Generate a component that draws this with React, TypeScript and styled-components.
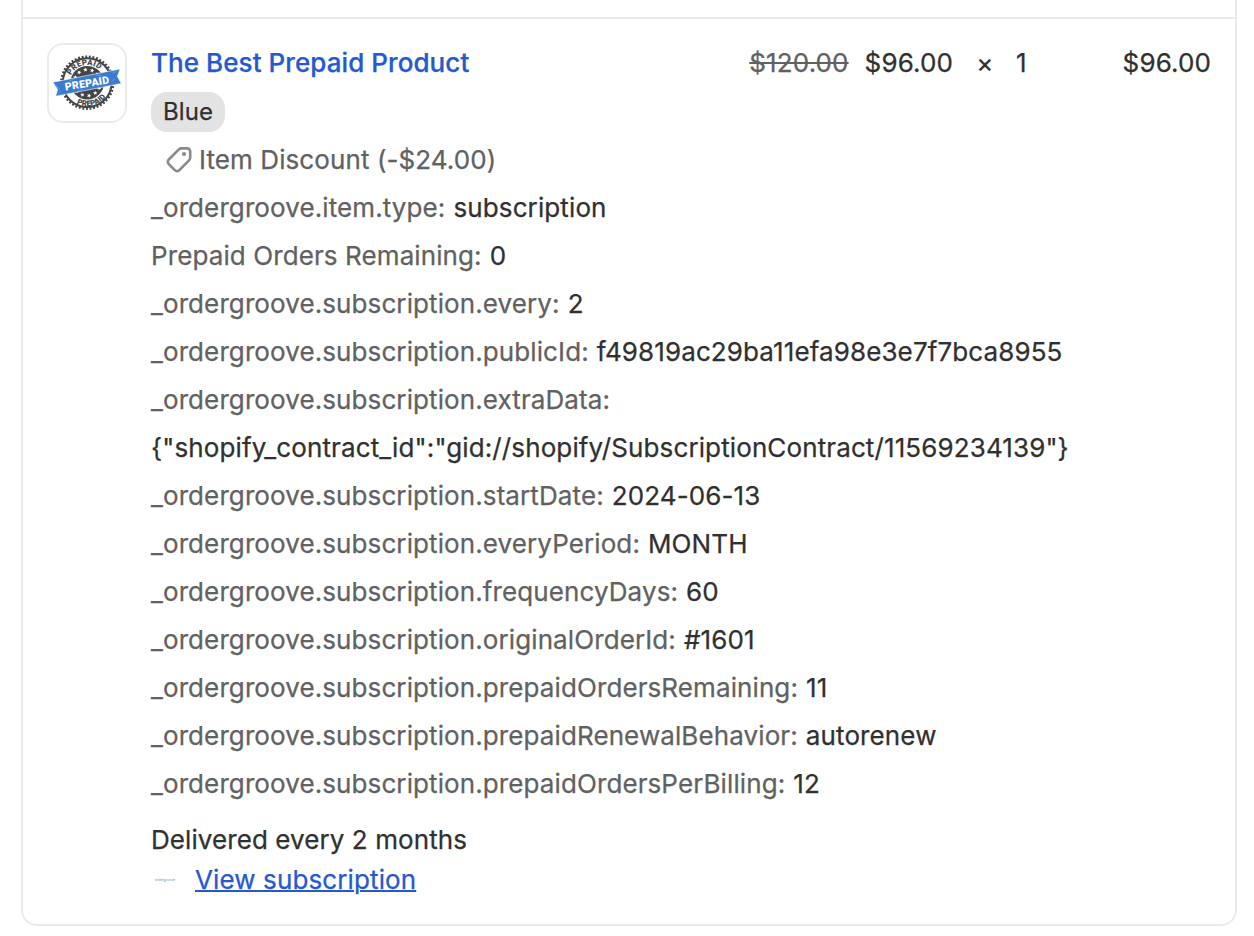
import React from "react";
import styled, { createGlobalStyle } from "styled-components";

const GlobalStyle = createGlobalStyle`
  *, *::before, *::after { box-sizing: border-box; }
  html, body { margin: 0; padding: 0; background: #fff; overflow: hidden; }
  body {
    font-family: Inter, "Liberation Sans", sans-serif;
    font-size: 26px;
    font-weight: 400;
    line-height: 40px;
    letter-spacing: 0.115px;
    color: #303030;
    -webkit-text-stroke: 0.25px currentColor;
    -webkit-font-smoothing: antialiased;
  }
  svg { -webkit-text-stroke: 0; letter-spacing: 0; }
`;

const Page = styled.main`
  height: 936px;
  padding: 0 17px 10px 21px;
  overflow: hidden;
`;

const Card = styled.section`
  display: flex;
  flex-direction: column;
  height: 926px;
  border: 2px solid #ebebeb;
  border-top: 0;
  border-radius: 0 0 16px 16px;
`;

const PreviousItem = styled.div`
  height: 19px;
  flex: none;
  border-bottom: 2px solid #ebebeb;
`;

const LineItem = styled.article`
  display: flex;
  gap: 24px;
  padding: 24px 24px 0;
`;

const Thumbnail = styled.div`
  flex: none;
  width: 80px;
  height: 80px;
  border: 2px solid #ebebeb;
  border-radius: 16px;

  svg { display: block; width: 76px; height: 76px; }
`;

const Content = styled.div`
  flex: 1;
  min-width: 0;
`;

const Header = styled.header`
  display: flex;
  height: 40px;
  white-space: nowrap;
`;

const Title = styled.a`
  flex: 1;
  color: #2459d1;
  font-weight: 500;
  letter-spacing: 0.07px;
  text-decoration: none;
`;

const OldPrice = styled.s`
  color: #616161;
  margin-right: 16px;
`;

const Times = styled.span`
  width: 20px;
  margin-left: 22px;
  text-align: center;
`;

const Quantity = styled.span`
  width: 46px;
  margin-left: 21px;
`;

const Total = styled.span`
  width: 149px;
  text-align: right;
`;

const Details = styled.div`
  display: flex;
  flex-direction: column;
  align-items: flex-start;
  gap: 8px;
  padding-top: 9px;
`;

const Variant = styled.span`
  height: 40px;
  padding: 0 12px;
  border-radius: 16px;
  background: #e3e3e3;
  font-size: 24px;
`;

const Discount = styled.div`
  display: flex;
  align-items: center;
  height: 40px;
  padding-left: 12px;
  color: #616161;
  letter-spacing: 0.09px;

  svg { width: 32px; height: 32px; margin-right: 4px; }
`;

const Property = styled.div<{ $stacked?: boolean }>`
  display: flex;
  flex-direction: ${(p) => (p.$stacked ? "column" : "row")};
  gap: 8px;
  white-space: nowrap;
`;

const Name = styled.span`
  color: #616161;
  letter-spacing: 0.1px;
`;

const Plan = styled.p`
  margin: 16px 0 0;
  letter-spacing: 0.08px;
`;

const Subscription = styled.div`
  display: flex;
  align-items: center;
  height: 40px;

  svg { width: 28px; height: 28px; margin-right: 16px; }
`;

const Link = styled.a`
  color: #2459d1;
  text-decoration: underline;
  text-decoration-thickness: 2px;
`;

const properties = [
  { name: "_ordergroove.item.type:", value: "subscription" },
  { name: "Prepaid Orders Remaining:", value: "0" },
  { name: "_ordergroove.subscription.every:", value: "2" },
  { name: "_ordergroove.subscription.publicId:", value: "f49819ac29ba11efa98e3e7f7bca8955" },
  {
    name: "_ordergroove.subscription.extraData:",
    value: '{"shopify_contract_id":"gid://shopify/SubscriptionContract/11569234139"}',
    stacked: true,
  },
  { name: "_ordergroove.subscription.startDate:", value: "2024-06-13" },
  { name: "_ordergroove.subscription.everyPeriod:", value: "MONTH" },
  { name: "_ordergroove.subscription.frequencyDays:", value: "60" },
  { name: "_ordergroove.subscription.originalOrderId:", value: "#1601" },
  { name: "_ordergroove.subscription.prepaidOrdersRemaining:", value: "11" },
  { name: "_ordergroove.subscription.prepaidRenewalBehavior:", value: "autorenew" },
  { name: "_ordergroove.subscription.prepaidOrdersPerBilling:", value: "12" },
];

const starPath = "M0-2.3 .6-.8 2.2-.7 1 .3 1.4 1.9 0 1-1.4 1.9-1 .3-2.2-.7-.6-.8Z";

function PrepaidStamp() {
  return (
    <svg viewBox="0 0 76 76" aria-hidden="true">
      <defs>
        <path id="upper-arc" d="M20.9 37.7a17.8 17.8 0 0 1 35.6 0" />
        <path id="lower-arc" d="M15.3 37.7a23.4 23.4 0 0 0 46.8 0" />
      </defs>
      <circle cx="38.2" cy="37.7" r="26" fill="none" stroke="#444547" strokeWidth="2.4" strokeDasharray="1.9 1.73" />
      <circle cx="38.2" cy="37.7" r="24.4" fill="#fff" stroke="#444547" strokeWidth="2" />
      <circle cx="38.2" cy="37.7" r="16.8" fill="#444547" />
      <g fill="#fff">
        {[-58, -30, 0, 30, 58, 122, 150, 180, 210, 238].map((a) => (
          <path key={a} d={starPath} transform={`rotate(${a - 8} 38.2 37.7) translate(38.2 24.6)`} />
        ))}
      </g>
      <g fill="#444547" fontFamily="Roboto, sans-serif" fontWeight="900" fontSize="7.8" textAnchor="middle">
        <text transform="translate(-.5) rotate(-11 38.7 37.7)" letterSpacing="0.3">
          <textPath href="#upper-arc" startOffset="50%">PREPAID</textPath>
        </text>
        <text transform="translate(-.5) rotate(-13 38.7 37.7)" letterSpacing="0.1">
          <textPath href="#lower-arc" startOffset="50%">PREPAID</textPath>
        </text>
      </g>
      <path d="M3.9 37.2 71.2 24 68.3 31.2 72.3 38.5 6.6 51.2 8.6 44.4Z" fill="#397bd3" stroke="#fff" strokeWidth=".6" />
      <path
        d="M7 40 10.5 44M9 48l3-2M20 36.4l4-2M48 30.3l5 .6M64 28l3-1.5M63 36l3-2.5M30 45.3l3-.4"
        stroke="#8db5e8"
        strokeWidth=".5"
        strokeLinecap="round"
      />
      <text
        x="38"
        y="42"
        transform="rotate(-9 38 38.5)"
        textAnchor="middle"
        textLength="44.5"
        fill="#fff"
        fontFamily="Roboto, sans-serif"
        fontWeight="900"
        fontSize="10.6"
      >
        PREPAID
      </text>
    </svg>
  );
}

function TagIcon() {
  return (
    <svg viewBox="0 0 32 32" fill="none" aria-hidden="true">
      <path
        d="M18 4.4h6.2a3 3 0 0 1 3 3v6.3c0 1-.3 1.8-1 2.5l-9.8 9.9a3.2 3.2 0 0 1-4.6 0l-6-6a3.2 3.2 0 0 1 0-4.6l9.8-9.9c.7-.7 1.4-1.2 2.4-1.2Z"
        stroke="#8a8a8a"
        strokeWidth="2.6"
      />
      <circle cx="21" cy="10" r="2.1" fill="#8a8a8a" />
    </svg>
  );
}

function OrdergrooveLogo() {
  return (
    <svg viewBox="0 0 28 28" aria-hidden="true">
      <text x="4" y="15.2" fontFamily="Inter, sans-serif" fontSize="3.6" fontWeight="400" textLength="20" fill="#8f9696">
        orderg<tspan fill="#62b5dc">roo</tspan>ve
      </text>
    </svg>
  );
}

export default function App() {
  return (
    <>
      <GlobalStyle />
      <Page>
        <Card>
          <PreviousItem />
          <LineItem>
            <Thumbnail>
              <PrepaidStamp />
            </Thumbnail>
            <Content>
              <Header>
                <Title>The Best Prepaid Product</Title>
                <OldPrice>$120.00</OldPrice>
                <span>$96.00</span>
                <Times>×</Times>
                <Quantity>1</Quantity>
                <Total>$96.00</Total>
              </Header>
              <Details>
                <Variant>Blue</Variant>
                <Discount>
                  <TagIcon />
                  Item Discount (-$24.00)
                </Discount>
                {properties.map((p) => (
                  <Property key={p.name} $stacked={p.stacked}>
                    <Name>{p.name}</Name>
                    <span>{p.value}</span>
                  </Property>
                ))}
              </Details>
              <Plan>Delivered every 2 months</Plan>
              <Subscription>
                <OrdergrooveLogo />
                <Link>View subscription</Link>
              </Subscription>
            </Content>
          </LineItem>
        </Card>
      </Page>
    </>
  );
}
